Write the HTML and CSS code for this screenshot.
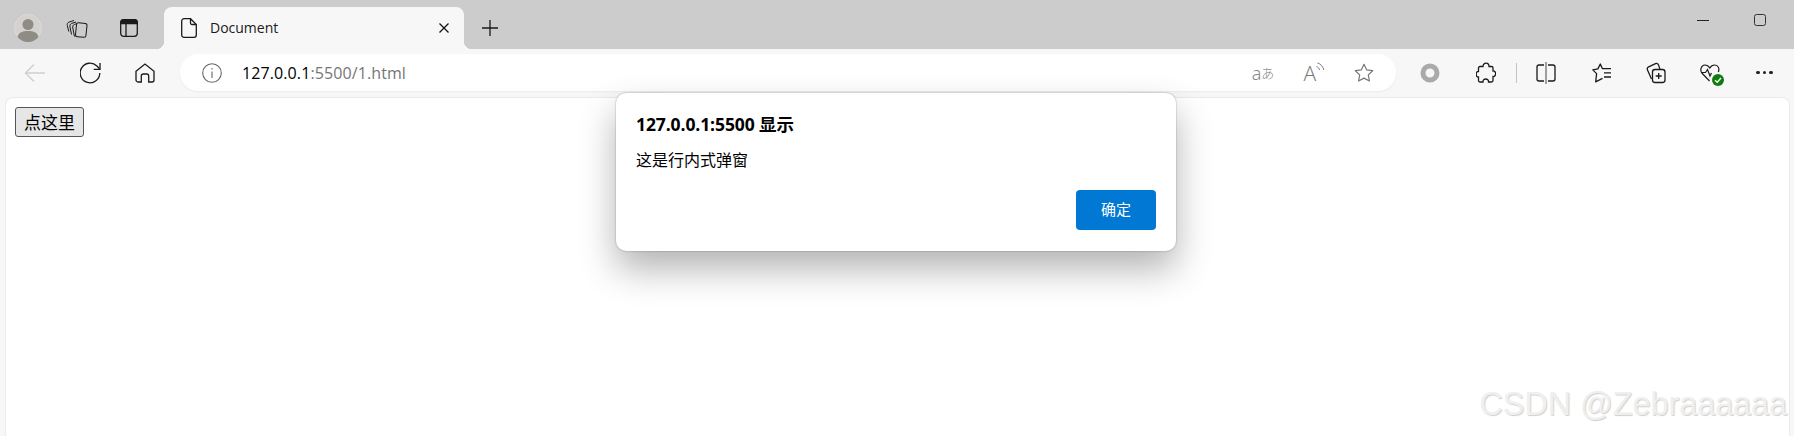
FILE: index.html
```html
<!DOCTYPE html>
<html lang="zh-CN">

<head>
  <meta charset="utf-8">
  <title>Document</title>
  <link rel="stylesheet" href="styles.css">
</head>

<body>
  <!-- tab strip -->
  <header class="tabstrip">
    <div class="avatar">
      <svg width="28" height="28" viewBox="0 0 28 28">
        <circle cx="14" cy="14" r="13.5" fill="#d4d2ce" stroke="#dcdad6" />
        <circle cx="14" cy="10.5" r="5.5" fill="#8f8c85" />
        <path d="M3.5 23c1-4.500 5-6 10.500-6s9.500 1.500 10.500 6a13.500 13.500 0 0 1-21 0z" fill="#8f8c85" />
      </svg>
    </div>
    <div class="strip-btn strip-collections">
      <svg width="22" height="22" viewBox="0 0 22 22" fill="none" stroke="#1a1a1a" stroke-width="1">
        <rect x="10" y="6" width="10.500" height="14" rx="2" transform="rotate(6 15 13)" />
        <path d="M8.500 19.500 6.800 11c-.3-1.800.2-3 1.500-3.500l2.500-.9" />
        <path d="M5.500 17.500 4 10c-.3-1.800.2-3 1.500-3.500L10 5" />
        <path d="M2.800 14.500 1.300 8.500C1 7 1.500 5.700 2.800 5.200L8 3.500" />
      </svg>
    </div>
    <div class="strip-btn strip-tabs">
      <svg width="18" height="18" viewBox="0 0 18 18" fill="none" stroke="#1a1a1a" stroke-width="1.300">
        <rect x=".7" y=".7" width="16.600" height="16.600" rx="3" />
        <path d="M.7 4.500V3.500A3 3 0 0 1 3.500.7h11a3 3 0 0 1 2.800 2.800v1z" fill="#1a1a1a" />
        <path d="M6 5v12" />
      </svg>
    </div>
    <div class="tab">
      <svg class="tab-icon" width="16" height="20" viewBox="0 0 16 20" fill="none" stroke="#1a1a1a" stroke-width="1.300">
        <path d="M3 .7h6.500l5.800 5.800V17a2.300 2.300 0 0 1-2.300 2.300H3A2.300 2.300 0 0 1 .7 17V3A2.300 2.300 0 0 1 3 .7z" />
        <path d="M9.500.7V5a1.500 1.500 0 0 0 1.500 1.500h4.300" />
      </svg>
      <span class="tab-title">Document</span>
      <svg class="tab-close" width="10" height="10" viewBox="0 0 10 10" stroke="#111" stroke-width="1.300">
        <path d="M.5.500l9 9M9.500.500l-9 9" />
      </svg>
    </div>
    <div class="strip-btn strip-new">
      <svg width="18" height="18" viewBox="0 0 18 18" stroke="#1a1a1a" stroke-width="1.300">
        <path d="M9 1v16M1 9h16" />
      </svg>
    </div>
    <div class="window-btns">
      <svg width="12" height="12" viewBox="0 0 12 12" stroke="#222" stroke-width="1">
        <path d="M0 6.500h12" />
      </svg>
      <svg width="12" height="12" viewBox="0 0 12 12" fill="none" stroke="#333" stroke-width="1">
        <rect x=".5" y=".5" width="11" height="11" rx="2" />
      </svg>
    </div>
  </header>

  <!-- toolbar -->
  <nav class="toolbar">
    <div class="tool tool-back">
      <svg width="22" height="20" viewBox="0 0 22 20" fill="none" stroke="#cfcfcf" stroke-width="1.300">
        <path d="M21 10H1.500M10 1.500 1.500 10l8.500 8.500" />
      </svg>
    </div>
    <div class="tool tool-reload">
      <svg width="22" height="22" viewBox="0 0 22 22" fill="none" stroke="#1a1a1a" stroke-width="1.300">
        <path d="M19.800 11a9.800 9.800 0 1 1-2.900-7L19.800 7" />
        <path d="M20 1v6.300h-6.300" />
      </svg>
    </div>
    <div class="tool tool-home">
      <svg width="20" height="20" viewBox="0 0 20 20" fill="none" stroke="#1a1a1a" stroke-width="1.300">
        <path d="M1 8.200 10 1l9 7.200V17a2 2 0 0 1-2 2h-3.300v-6a2 2 0 0 0-2-2H8.300a2 2 0 0 0-2 2v6H3a2 2 0 0 1-2-2z" />
      </svg>
    </div>
    <div class="addressbar">
      <svg class="info-icon" width="20" height="20" viewBox="0 0 20 20" fill="none" stroke="#666" stroke-width="1.100">
        <circle cx="10" cy="10" r="9.300" />
        <path d="M10 8.500v6.500M10 5v1.500" />
      </svg>
      <span class="url"><span class="url-host">127.0.0.1</span>:5500/1.html</span>
      <div class="address-actions">
        <span class="translate">a<span class="translate-kana">あ</span></span>
        <span class="read-aloud">A<svg width="9" height="12" viewBox="0 0 9 12" fill="none" stroke="#777" stroke-width="1">
            <path d="M.5 4.500c1.500.5 2.500 1.700 3 3.500M1.500 1c3 .7 5.500 3.500 6.300 7" />
          </svg></span>
        <svg width="20" height="20" viewBox="0 0 20 20" fill="none" stroke="#777" stroke-width="1.200">
          <path d="M10 1.300l2.700 5.600 6 .8-4.400 4.200 1.100 6.100L10 15.100l-5.400 2.900 1.100-6.100L1.300 7.700l6-.8z" stroke-linejoin="round" />
        </svg>
      </div>
    </div>
    <div class="toolbar-icons">
      <svg class="ti-ring" width="20" height="20" viewBox="0 0 20 20" fill="none" stroke="#aaa" stroke-width="5">
        <circle cx="10" cy="10" r="7" />
      </svg>
      <svg class="ti-puzzle" width="20" height="22" viewBox="0 0 20 22" fill="none" stroke="#1a1a1a" stroke-width="1.300">
        <path d="M7 4.500c0-4.500 6-4.500 6 0h2.500a1.500 1.500 0 0 1 1.500 1.500v3c3.500-.5 3.500 6 0 5.500v4A1.500 1.500 0 0 1 15.500 20h-3c.5-4-6-4-5.500 0H4a1.500 1.500 0 0 1-1.500-1.500V15c-3 .5-3-6 0-5.500V6A1.500 1.500 0 0 1 4 4.500z" />
      </svg>
      <span class="ti-sep"></span>
      <svg class="ti-split" width="20" height="22" viewBox="0 0 20 22" fill="none" stroke="#1a1a1a" stroke-width="1.300">
        <path d="M8 3H3A2 2 0 0 0 1 5v12a2 2 0 0 0 2 2h5M12 3h5a2 2 0 0 1 2 2v12a2 2 0 0 1-2 2h-5" />
        <path d="M10 0v22" stroke="#444" stroke-width="1" />
      </svg>
      <svg class="ti-favs" width="20" height="20" viewBox="0 0 20 20" fill="none" stroke="#1a1a1a" stroke-width="1.300">
        <path d="M10.300 5.500 8.300 1 5.900 5.900.8 6.900l3.800 3.700L3.700 18.800l6.800-3.500" stroke-linejoin="round" />
        <path d="M10 5.600h9M12 9.800h7M12 14h7" />
      </svg>
      <svg class="ti-collect" width="20" height="22" viewBox="0 0 20 22" fill="none" stroke="#1a1a1a" stroke-width="1.300">
        <rect x="6.500" y="7.500" width="12.500" height="13" rx="2.500" />
        <path d="M12.700 11v6M9.700 14h6" />
        <path d="M5.500 17 1.500 8C.9 6.600 1.400 5.400 2.700 4.800L9.500 1.700c1.300-.6 2.500-.1 3 1.200l1.500 4.500" />
      </svg>
      <span class="ti-health">
        <svg width="20" height="18" viewBox="0 0 20 18" fill="none" stroke="#1a1a1a" stroke-width="1.200">
          <path d="M9.500 17 2.300 9.500C-.5 6.500 1 1 5 1c2 0 3.500 1 4.800 3C11 2 12.700 1 14.700 1c3.800 0 5 4 3.600 7" />
          <path d="M1 8.500h4.500l2-3 2.500 6.500 1.500-3" />
        </svg>
        <span class="health-badge">
          <svg width="8" height="8" viewBox="0 0 8 8" fill="none" stroke="#fff" stroke-width="1.400">
            <path d="M1 4.200 3.200 6.300 7 2" />
          </svg>
        </span>
      </span>
      <span class="ti-more"><i></i><i></i><i></i></span>
    </div>
  </nav>

  <!-- page -->
  <main class="page">
    <button class="page-btn">点这里</button>
    <div class="watermark">CSDN @Zebraaaaaa</div>
  </main>

  <!-- alert -->
  <div class="dialog">
    <div class="dialog-title">127.0.0.1:5500 显示</div>
    <div class="dialog-msg">这是行内式弹窗</div>
    <div class="dialog-foot">
      <button class="dialog-ok">确定</button>
    </div>
  </div>
</body>

</html>
```

FILE: styles.css
```css
* {
  padding: 0;
  margin: 0;
  box-sizing: border-box;
}

html,
body {
  height: 436px;
  overflow: hidden;
}

body {
  display: flex;
  flex-direction: column;
  position: relative;
  background-color: #f7f7f7;
  font-family: "Open Sans", "Noto Sans CJK SC", sans-serif;
  color: #000;
}

svg {
  display: block;
  flex: none;
}

/* tab strip */
.tabstrip {
  height: 49px;
  display: flex;
  align-items: flex-end;
  background-color: #ccc;
}

.avatar {
  width: 28px;
  height: 28px;
  margin: 0 0 7px 14px;
}

.strip-btn {
  display: flex;
  align-items: center;
  justify-content: center;
  height: 42px;
}

.strip-collections {
  width: 22px;
  margin-left: 24px;
}

.strip-tabs {
  width: 18px;
  margin-left: 32px;
}

.tab {
  width: 300px;
  height: 42px;
  margin-left: 26px;
  padding: 0 15px 0 17px;
  position: relative;
  display: flex;
  align-items: center;
  background-color: #f7f7f7;
  border-radius: 8px 8px 0 0;
}

.tab::before,
.tab::after {
  content: "";
  position: absolute;
  bottom: 0;
  width: 8px;
  height: 8px;
}

.tab::before {
  left: -8px;
  background: radial-gradient(circle at 0 0, #ccc 8px, #f7f7f7 8.500px);
}

.tab::after {
  right: -8px;
  background: radial-gradient(circle at 100% 0, #ccc 8px, #f7f7f7 8.500px);
}

.tab-title {
  flex: 1;
  margin-left: 13px;
  padding-bottom: 2px;
  font-size: 14px;
  color: #1a1a1a;
}

.strip-new {
  width: 18px;
  margin-left: 17px;
}

.window-btns {
  align-self: flex-start;
  margin-left: auto;
  margin-right: 28px;
  padding-top: 14px;
  display: flex;
  gap: 45px;
}

/* toolbar */
.toolbar {
  height: 48px;
  display: flex;
  align-items: center;
  padding-bottom: 1px;
}

.tool {
  display: flex;
  justify-content: center;
}

.tool-back {
  width: 22px;
  margin-left: 24px;
}

.tool-reload {
  width: 22px;
  margin-left: 34px;
}

.tool-home {
  width: 20px;
  margin-left: 33px;
}

.addressbar {
  width: 1216px;
  height: 37px;
  margin-left: 25px;
  padding: 0 22px 0 22px;
  display: flex;
  align-items: center;
  background-color: #fff;
  border-radius: 18px;
  box-shadow: 0 1px 2px rgba(0, 0, 0, .05);
}

.url {
  margin-left: 20px;
  font-size: 16px;
  letter-spacing: .1px;
  color: #767676;
}

.url-host {
  color: #000;
}

.address-actions {
  margin-left: auto;
  display: flex;
  align-items: center;
  gap: 29px;
  color: #777;
}

.translate {
  font-family: "Noto Sans", "Noto Sans CJK JP", sans-serif;
  font-size: 18px;
  font-weight: 300;
  line-height: 20px;
  display: flex;
  align-items: center;
  color: #888;
}

.translate-kana {
  font-size: 13px;
}

.read-aloud {
  display: flex;
  font-size: 21px;
  font-weight: 300;
  line-height: 22px;
}

.toolbar-icons {
  display: flex;
  align-items: center;
  margin-left: 24px;
}

.ti-puzzle {
  margin-left: 36px;
}

.ti-sep {
  width: 1px;
  height: 20px;
  margin-left: 20px;
  background-color: #c4c4c4;
}

.ti-split {
  margin-left: 19px;
}

.ti-favs {
  margin-left: 36px;
}

.ti-collect {
  margin-left: 34px;
}

.ti-health {
  margin-left: 34px;
  position: relative;
}

.health-badge {
  position: absolute;
  right: -4px;
  bottom: -4px;
  width: 12px;
  height: 12px;
  display: flex;
  align-items: center;
  justify-content: center;
  background-color: #107c10;
  border-radius: 50%;
}

.ti-more {
  display: flex;
  gap: 3px;
  margin-left: 36px;
}

.ti-more i {
  width: 3.500px;
  height: 3.500px;
  background-color: #222;
  border-radius: 50%;
}

/* page */
.page {
  flex: 1;
  position: relative;
  margin: 0 4px 0 5px;
  padding: 9px 9px;
  background-color: #fff;
  border: 1px solid #ebebeb;
  border-bottom: 0;
  border-radius: 8px 8px 0 0;
}

.page-btn {
  display: block;
  width: 69px;
  height: 30px;
  font-family: "Noto Sans CJK SC", sans-serif;
  font-size: 17px;
  line-height: 20px;
  background-color: #e6e6e6;
  border: 1px solid #555;
  border-radius: 3px;
}

.watermark {
  position: absolute;
  right: 2px;
  bottom: 14px;
  font-family: "Liberation Sans", sans-serif;
  font-size: 32.300px;
  line-height: 36px;
  white-space: nowrap;
  color: #efefef;
  text-shadow: 1px 1px 1px #d0d0d0;
}

/* alert */
.dialog {
  position: absolute;
  left: 616px;
  top: 93px;
  width: 560px;
  height: 158px;
  padding: 20px 20px 21px;
  display: flex;
  flex-direction: column;
  background-color: #fff;
  border-radius: 10px;
  box-shadow: 0 0 2px rgba(0, 0, 0, .35), 0 18px 36px rgba(0, 0, 0, .3);
}

.dialog-title {
  font-size: 17.500px;
  font-weight: 700;
  line-height: 22px;
  letter-spacing: -.1px;
}

.dialog-msg {
  margin-top: 14px;
  font-family: "Noto Sans CJK SC", sans-serif;
  font-size: 16px;
  line-height: 20px;
}

.dialog-foot {
  margin-top: auto;
  display: flex;
  justify-content: flex-end;
}

.dialog-ok {
  width: 80px;
  height: 40px;
  padding-bottom: 3px;
  font-family: "Noto Sans CJK SC", sans-serif;
  font-size: 15px;
  color: #fff;
  background-color: #0078d4;
  border: 0;
  border-radius: 4px;
}
```
